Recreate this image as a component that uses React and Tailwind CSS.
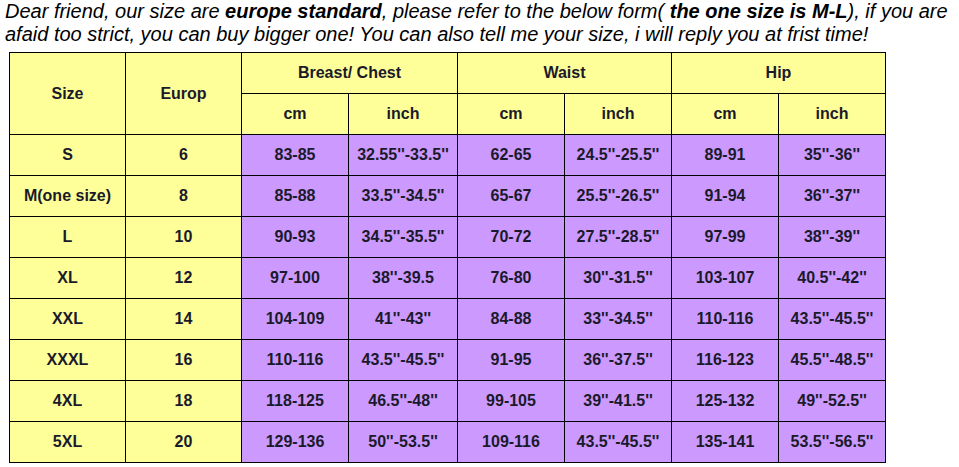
const rows = [
  ["S", "6", "83-85", "32.55''-33.5''", "62-65", "24.5''-25.5''", "89-91", "35''-36''"],
  ["M(one size)", "8", "85-88", "33.5''-34.5''", "65-67", "25.5''-26.5''", "91-94", "36''-37''"],
  ["L", "10", "90-93", "34.5''-35.5''", "70-72", "27.5''-28.5''", "97-99", "38''-39''"],
  ["XL", "12", "97-100", "38''-39.5", "76-80", "30''-31.5''", "103-107", "40.5''-42''"],
  ["XXL", "14", "104-109", "41''-43''", "84-88", "33''-34.5''", "110-116", "43.5''-45.5''"],
  ["XXXL", "16", "110-116", "43.5''-45.5''", "91-95", "36''-37.5''", "116-123", "45.5''-48.5''"],
  ["4XL", "18", "118-125", "46.5''-48''", "99-105", "39''-41.5''", "125-132", "49''-52.5''"],
  ["5XL", "20", "129-136", "50''-53.5''", "109-116", "43.5''-45.5''", "135-141", "53.5''-56.5''"],
];

const yellow = "bg-[#ffff99] flex items-center justify-center";
const purple = "bg-[#cc99ff] flex items-center justify-center";

export default function App() {
  return (
    <div className="w-[959px] h-[467px] bg-white overflow-hidden font-['Liberation_Sans',Arial,sans-serif] text-[#111]">
      <p className="pl-[5px] italic text-[20px] leading-[23px] text-black whitespace-nowrap">
        Dear friend, our size are <b>europe standard</b>, please refer to the below form( <b>the one size is M-L</b>), if you are
        <br />
        afaid too strict, you can buy bigger one! You can also tell me your size, i will reply you at frist time!
      </p>
      <div className="mt-[6px] ml-[9px] w-[877px] grid grid-cols-[115px_115px_106px_108px_106px_106px_106px_106px] auto-rows-[40px] gap-px p-px bg-black font-bold text-[16px] text-[#1a1a2a]">
        <div className={`${yellow} row-span-2`}>Size</div>
        <div className={`${yellow} row-span-2`}>Europ</div>
        <div className={`${yellow} col-span-2`}>Breast/ Chest</div>
        <div className={`${yellow} col-span-2`}>Waist</div>
        <div className={`${yellow} col-span-2`}>Hip</div>
        <div className={yellow}>cm</div>
        <div className={yellow}>inch</div>
        <div className={yellow}>cm</div>
        <div className={yellow}>inch</div>
        <div className={yellow}>cm</div>
        <div className={yellow}>inch</div>
        {rows.map((r) =>
          r.map((c, i) => (
            <div key={r[0] + i} className={i < 2 ? yellow : purple}>
              {c}
            </div>
          ))
        )}
      </div>
    </div>
  );
}
